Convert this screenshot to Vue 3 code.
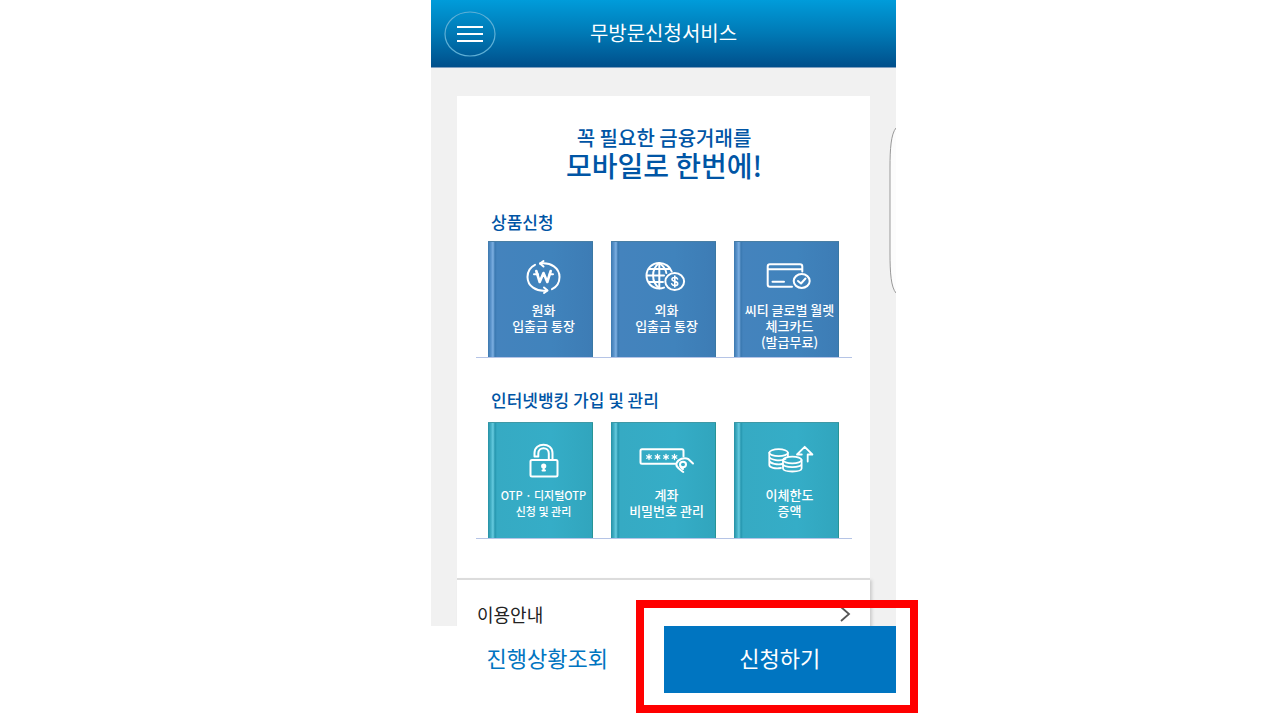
<script setup>
const shelves = [
  {
    id: 'products',
    title: '상품신청',
    books: [
      { icon: 'won', lines: ['원화', '입출금 통장'] },
      { icon: 'globe', lines: ['외화', '입출금 통장'] },
      { icon: 'card', lines: ['씨티 글로벌 월렛', '체크카드', '(발급무료)'] },
    ],
  },
  {
    id: 'banking',
    title: '인터넷뱅킹 가입 및 관리',
    books: [
      { icon: 'lock', small: true, lines: ['OTP · 디지털OTP', '신청 및 관리'] },
      { icon: 'password', lines: ['계좌', '비밀번호 관리'] },
      { icon: 'coins', lines: ['이체한도', '증액'] },
    ],
  },
]
</script>

<template>
  <div class="page">
    <main class="phone">
      <header class="topbar">
        <button class="menu" type="button" aria-label="메뉴">
          <svg viewBox="0 0 52 46" fill="none">
            <ellipse cx="26" cy="23" rx="25" ry="22" stroke="#5fb0d6" stroke-width="1.2" />
            <path d="M13 16H39M13 23H39M13 30H39" stroke="#fff" stroke-width="2.2" />
          </svg>
        </button>
        <h1>무방문신청서비스</h1>
      </header>

      <div class="content">
        <section class="card">
          <h2 class="headline">
            <span>꼭 필요한 금융거래를</span>
            <strong>모바일로 한번에!</strong>
          </h2>

          <section v-for="shelf in shelves" :key="shelf.id" class="group" :class="shelf.id">
            <h3>{{ shelf.title }}</h3>
            <div class="shelf">
              <a v-for="book in shelf.books" :key="book.icon" href="#" class="book">
                <svg class="icon" viewBox="0 0 60 40" fill="none" stroke="#fff" stroke-width="2" stroke-linecap="round" stroke-linejoin="round">
                  <g v-if="book.icon === 'won'">
                    <path d="M26 7.500C37 6 45.500 12 45.500 21C45.500 26.500 42.500 31 38 33.200" />
                    <path d="M33 34.500C22 36 13.500 30 13.500 21C13.500 15.500 16.500 11 21 8.800" />
                    <path d="M29.500 5L26 7.500L29.500 10.500M30 31.500L33.500 34.500L30 37" />
                    <path d="M20 18.300H24M35.500 18.300H39" />
                    <path d="M22.300 15L25.700 26L29.500 17L33.300 26L36.700 15" stroke-width="2.600" />
                  </g>
                  <g v-else-if="book.icon === 'globe'">
                    <path d="M27 31.600C25.500 32.200 24 32.500 22.300 32.500C15 32.500 9.500 26.700 9.500 19.600C9.500 12.500 15 6.900 22.300 6.900C28 6.900 33 10.500 34.700 15.500" />
                    <path d="M22.300 7V32M10 19.600H27M12 13H33M12 26H26" />
                    <path d="M22.300 7C14 13 14 26 22.300 32.300M22.300 7C27 10.500 29 14 29.300 17" />
                    <ellipse cx="37.700" cy="25.500" rx="9.400" ry="8.600" />
                    <path d="M40.500 23C39.500 20.700 35 21 35 23.300C35 26 40.700 24.700 40.700 27.700C40.700 30.200 35.500 30.200 34.700 27.800M37.800 20V31" stroke-width="1.600" />
                  </g>
                  <g v-else-if="book.icon === 'card'">
                    <path d="M32 30.700H10Q7.700 30.700 7.700 28.500V10.500Q7.700 8.300 10 8.300H40Q42.300 8.300 42.300 10.500V15.500M8 13.300H42M12.500 25.700H24" />
                    <ellipse cx="41.700" cy="25" rx="8" ry="6.900" />
                    <path d="M38 25L41 27.500L45.500 22.500" />
                  </g>
                  <g v-else-if="book.icon === 'lock'">
                    <rect x="16.500" y="19" width="27" height="16.500" rx="1.500" />
                    <path d="M20.500 15.500V12C20.500 1 38.500 1 38.500 12V18.500M24.300 15.500V12.500C24.300 5.500 34.800 5.500 34.800 12.500V18.500M20.500 15.500H24.300" />
                    <circle cx="29.700" cy="25" r="1.600" fill="#fff" />
                    <path d="M29.700 26V29.500M28.500 29.500H31" />
                  </g>
                  <g v-else-if="book.icon === 'password'">
                    <path d="M39 22.700H5Q3.500 22.700 3.500 21.200V9.800Q3.500 8.300 5 8.300H45Q46.500 8.300 46.500 9.800V15.500" />
                    <path v-for="x in [12, 20.500, 29, 37.500]" :key="x" :transform="`translate(${x} 16)`" d="M0 -2.500V2.500M-2.300 -1.300L2.300 1.300M2.300 -1.300L-2.300 1.300" stroke-width="1.300" />
                    <path d="M56 22.500L51.500 18.200C47.500 15.800 41 18 39.500 22.500C38.500 26 42.500 28 46.300 31" />
                    <ellipse cx="46" cy="23.500" rx="3" ry="2.700" />
                    <path d="M43.500 25.500C44 27 45 27.500 46 28" />
                  </g>
                  <g v-else stroke-width="1.800">
                    <ellipse cx="18.600" cy="11.700" rx="9.300" ry="3.500" />
                    <path d="M9.300 11.700V24C9.300 26.500 15 28 21 27M27.900 11.700V15M9.300 16C10.500 19 20 20.500 25.500 18M9.300 20C10.500 22.500 17 24 22.300 23" />
                    <ellipse cx="32.300" cy="19" rx="9.300" ry="3.300" />
                    <path d="M23 19V27.500C23.500 31.500 41.200 31.500 41.600 27.500V19M23 23.300C24 27 40.500 27 41.600 23.300" />
                    <path d="M41.800 13.500H37L44.700 5.800L52.400 13.500H47.700V20.500" />
                  </g>
                </svg>
                <span class="label" :class="{ small: book.small }">
                  <span v-for="line in book.lines" :key="line">{{ line }}</span>
                </span>
              </a>
            </div>
          </section>
        </section>

        <a href="#" class="guide">
          <span>이용안내</span>
          <svg viewBox="0 0 12 16" fill="none"><path d="M2 1L10 8L2 15" stroke="#555" stroke-width="1.800" /></svg>
        </a>

        <svg class="handle" viewBox="0 0 7 168">
          <path d="M7 1C2 7 1 22 1 40V126C1 146 2 160 7 166Z" fill="#fcfcfc" />
          <path d="M7 1C2 7 1 22 1 40V126C1 146 2 160 7 166" fill="none" stroke="#999" />
        </svg>
      </div>

      <nav class="actions">
        <button type="button" class="status">진행상황조회</button>
        <div class="apply-slot">
          <button type="button" class="apply">신청하기</button>
          <span class="highlight"></span>
        </div>
      </nav>
    </main>
  </div>
</template>

<style>
body {
  background: #fff;
}
</style>

<style scoped>
* {
  box-sizing: border-box;
}
.page {
  display: grid;
  grid-template-columns: 431fr 465fr 384fr;
  height: 100vh;
  font-family: "Noto Sans CJK KR", sans-serif;
}
.phone {
  grid-column: 2;
  display: flex;
  flex-direction: column;
  min-width: 0;
  min-height: 0;
  padding-bottom: 27px;
}
h1,
h2,
h3 {
  margin: 0;
  font-weight: 500;
}
button {
  border: 0;
  padding: 0;
  font-family: inherit;
  cursor: pointer;
}
a {
  color: inherit;
  text-decoration: none;
}
svg {
  display: block;
}
.topbar {
  flex: none;
  display: grid;
  grid-template-columns: 52px 1fr 52px;
  align-items: center;
  height: 68px;
  padding: 0 13px;
  border-bottom: 1px solid #7f9fc0;
  background: linear-gradient(#009cda, #0079b5 50%, #004f8b);
}
.menu {
  width: 52px;
  height: 46px;
  background: none;
}
.menu svg {
  width: 52px;
  height: 46px;
}
.topbar h1 {
  padding-bottom: 2px;
  color: #fff;
  font-size: 20px;
  line-height: 28px;
  font-weight: 400;
  text-align: center;
}
.content {
  position: relative;
  flex: 1;
  min-height: 0;
  overflow: hidden;
  padding: 28px 26px 0;
  background: #f1f1f1;
}
.card {
  padding: 28px 18px 39px 19px;
  background: #fff;
}
.headline {
  display: flex;
  flex-direction: column;
  align-items: center;
  padding-bottom: 2px;
  color: #0055a5;
}
.headline span {
  font-size: 20px;
  line-height: 28px;
}
.headline strong {
  font-size: 28px;
  line-height: 26px;
  font-weight: 500;
}
.group {
  padding-top: 28px;
}
.group h3 {
  margin-bottom: 5px;
  padding-left: 15px;
  color: #0055a5;
  font-size: 17px;
  line-height: 28px;
}
.banking h3 {
  margin-bottom: 8px;
}
.shelf {
  display: grid;
  grid-template-columns: repeat(3, 1fr);
  gap: 18px;
  padding: 0 13px 0 12px;
  border-bottom: 1px solid #b5c4e6;
}
.book {
  display: flex;
  flex-direction: column;
  align-items: center;
  height: 116px;
  padding: 15px 0 0 6px;
  color: #fff;
  box-shadow: inset 0 1px #4a7fa5, inset -1px 0 #3a78a4;
  background: linear-gradient(90deg, #3c78ae 0, #5b94cc 3px, #7eb0e2 5px, #3a78b0 7px, #4483bd 9px, #4083bc 60%, #3d7cb5);
}
.banking .book {
  padding-top: 19px;
  box-shadow: inset 0 1px #3f99a6, inset -1px 0 #279496;
  background: linear-gradient(90deg, #2590a4 0, #43b0c6 3px, #68cce0 5px, #2696ae 7px, #36aac3 9px, #35adc7 60%, #31a5bd);
}
.icon {
  flex: none;
  width: 60px;
  height: 40px;
  margin-bottom: 6px;
}
.label {
  display: flex;
  flex-direction: column;
  align-items: center;
  font-size: 13px;
  line-height: 16px;
  font-weight: 500;
  white-space: nowrap;
}
.label.small {
  font-size: 11px;
}
.guide {
  display: flex;
  align-items: center;
  justify-content: space-between;
  height: 72px;
  padding: 0 19px 2px 20px;
  border-top: 2px solid #dcdcdc;
  background: #fff;
  box-shadow: 2px 2px 3px #ccc;
  color: #222;
  font-size: 18px;
  line-height: 20px;
}
.guide svg {
  width: 12px;
  height: 16px;
}
.handle {
  position: absolute;
  top: 59px;
  right: 0;
  width: 7px;
  height: 168px;
}
.actions {
  flex: none;
  display: grid;
  grid-template-columns: 1fr 1fr;
  height: 67px;
}
.actions button {
  padding-bottom: 6px;
  font-size: 22px;
  line-height: 32px;
}
.status {
  background: #fff;
  color: #0075c1;
}
.apply-slot {
  position: relative;
  display: grid;
}
.apply {
  background: #0075c1;
  color: #fff;
}
.highlight {
  position: absolute;
  inset: -26px -22px -20px -28px;
  border: 8px solid #f00;
  pointer-events: none;
}
</style>
